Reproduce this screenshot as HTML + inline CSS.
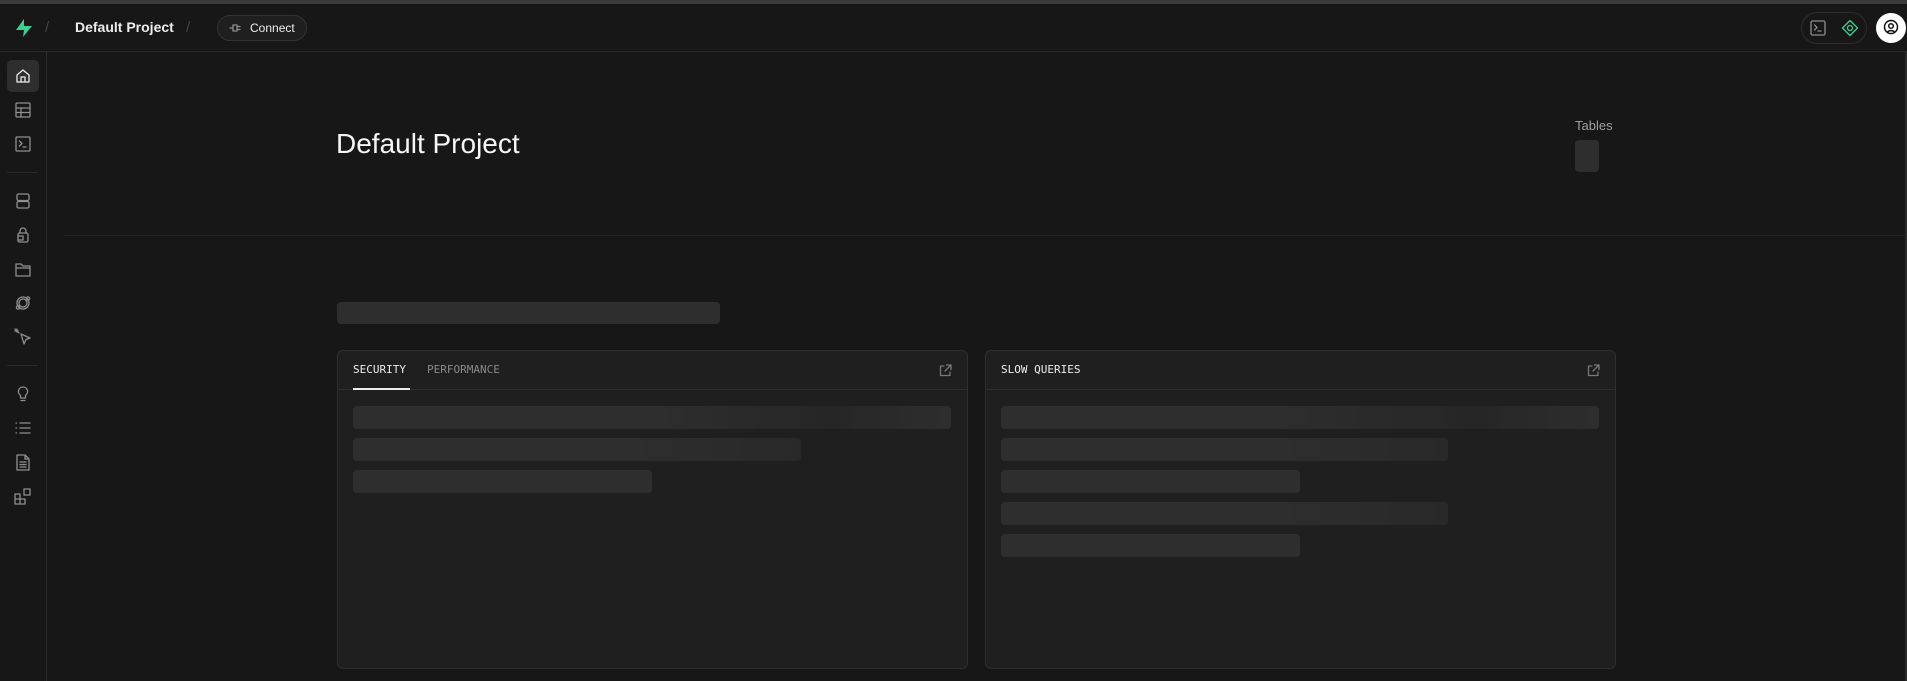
<!DOCTYPE html>
<html><head><meta charset="utf-8"><style>
*{box-sizing:border-box;margin:0;padding:0}
body{width:1907px;height:681px;background:#171717;overflow:hidden;position:relative;font-family:"Liberation Sans",sans-serif;color:#ededed}
.abs{position:absolute}
.sk{position:absolute;background:#2e2e2e;border-radius:4px;height:23px}
.mono{font-family:"DejaVu Sans Mono","Liberation Mono",monospace;font-size:11px}
svg{position:absolute;fill:none;stroke:#8f8f8f;stroke-width:1.3;stroke-linecap:round;stroke-linejoin:round}
</style></head><body>
<div class="abs" style="left:0;top:0;width:1907px;height:4px;background:#3b3b3b"></div>
<div class="abs" style="left:0;top:51px;width:1907px;height:1px;background:#2a2a2a"></div>
<div class="abs" style="left:46px;top:52px;width:1px;height:629px;background:#2a2a2a"></div>
<div class="abs" style="left:1905px;top:52px;width:2px;height:629px;background:#2a2a2a"></div>
<svg style="left:14px;top:18px;stroke:none" width="20" height="20" viewBox="0 0 20 20"><path d="M10 1 L2 12 H10 L9 19 L18 8 H10 Z" fill="#3ecf8e"/></svg>
<div class="abs" style="left:45px;top:19px;color:#444;font-size:15px">/</div>
<div class="abs" style="left:75px;top:19px;font-size:14px;font-weight:bold;color:#ededed">Default Project</div>
<div class="abs" style="left:186px;top:19px;color:#444;font-size:15px">/</div>
<div class="abs" style="left:217px;top:15px;width:90px;height:26px;border:1px solid #333;border-radius:13px;background:#1f1f1f"></div>
<svg style="left:229px;top:22px" width="13" height="12" viewBox="0 0 13 12"><path d="M1 6H4M4 3H8V9H4ZM8 4.5H11M8 7.5H11"/></svg>
<div class="abs" style="left:250px;top:21px;font-size:12px;color:#ededed">Connect</div>
<div class="abs" style="left:1801px;top:12px;width:66px;height:32px;border:1px solid #2e2e2e;border-radius:16px"></div>
<svg style="left:1810px;top:20px" width="16" height="16" viewBox="0 0 16 16"><rect x="1" y="1" width="14" height="14" rx="1.5"/><path d="M4.5 5L7 7.5L4.5 10M8 11H11"/></svg>
<svg style="left:1841px;top:19px;stroke:#3ecf8e" width="18" height="18" viewBox="0 0 18 18"><path d="M9 1.5L16.5 9L9 16.5L1.5 9Z"/><circle cx="9" cy="9" r="2.5"/></svg>
<div class="abs" style="left:1876px;top:13px;width:30px;height:30px;border-radius:50%;background:#fff"></div>
<svg style="left:1883px;top:19px;stroke:#111;stroke-width:1.5" width="16" height="18" viewBox="0 0 16 18"><circle cx="8" cy="8" r="6.5"/><circle cx="8" cy="7" r="2.3"/><path d="M4.5 13.5C5 11 11 11 11.5 13.5"/></svg>
<div class="abs" style="left:7px;top:60px;width:32px;height:32px;border-radius:5px;background:#2e2e2e"></div>
<svg style="left:15px;top:68px;stroke:#ededed" width="16" height="16" viewBox="0 0 16 16"><path d="M2 7L8 2L14 7V14H2ZM6 14V9H10V14"/></svg>
<svg style="left:15px;top:102px" width="16" height="16" viewBox="0 0 16 16"><rect x="1" y="1" width="14" height="14" rx="1"/><path d="M1 6H15M1 10.5H15M6 6V15"/></svg>
<svg style="left:15px;top:136px" width="16" height="16" viewBox="0 0 16 16"><rect x="1" y="1" width="14" height="14" rx="1"/><path d="M4.5 5L7 7.5L4.5 10M8 11H11"/></svg>
<div class="abs" style="left:7px;top:172px;width:31px;height:1px;background:#2a2a2a"></div>
<svg style="left:15px;top:193px" width="16" height="16" viewBox="0 0 16 16"><rect x="2" y="1" width="12" height="6.5" rx="1.5"/><rect x="2" y="8.5" width="12" height="6.5" rx="1.5"/></svg>
<svg style="left:15px;top:227px" width="16" height="16" viewBox="0 0 16 16"><path d="M5 6V4A3 3 0 0 1 11 4V6"/><rect x="3" y="6" width="10" height="9" rx="1.5"/><path d="M3 9H8V13H3"/></svg>
<svg style="left:15px;top:261px" width="16" height="16" viewBox="0 0 16 16"><path d="M1 3H6L8 5H15V15H1ZM1 7H15"/></svg>
<svg style="left:15px;top:295px" width="16" height="16" viewBox="0 0 16 16"><circle cx="8" cy="8" r="6"/><circle cx="13" cy="3.5" r="1.6"/><circle cx="3" cy="12.5" r="1.6"/><circle cx="8" cy="8" r="4"/></svg>
<svg style="left:14px;top:328px" width="18" height="18" viewBox="0 0 18 18"><path d="M1 1L5 5M3 1V4M1 3H4M7 6L16 10L12 11.5L10 16Z"/></svg>
<div class="abs" style="left:7px;top:365px;width:31px;height:1px;background:#2a2a2a"></div>
<svg style="left:15px;top:386px" width="16" height="17" viewBox="0 0 16 17"><path d="M8 1A4.5 4.5 0 0 0 5.5 9.3V12H10.5V9.3A4.5 4.5 0 0 0 8 1ZM6 14.5H10"/></svg>
<svg style="left:15px;top:420px" width="16" height="16" viewBox="0 0 16 16"><path d="M5 3H15M5 8H15M5 13H15M1 3H1.5M1 8H1.5M1 13H1.5"/></svg>
<svg style="left:15px;top:454px" width="16" height="17" viewBox="0 0 16 17"><path d="M2 1H10L14 5V16H2ZM5 8H11M5 10.5H11M5 13H11M10 1V5H14"/></svg>
<svg style="left:14px;top:488px" width="17" height="17" viewBox="0 0 17 17"><path d="M1 6H6V11H1ZM6 11H11V16H6ZM1 11H6V16H1ZM10 1H16V7H10Z"/></svg>
<div class="abs" style="left:336px;top:128px;font-size:28px;color:#f5f5f5">Default Project</div>
<div class="abs" style="left:1575px;top:118px;font-size:13px;color:#a0a0a0">Tables</div>
<div class="sk" style="left:1575px;top:140px;width:24px;height:32px;border-radius:4px"></div>
<div class="abs" style="left:64px;top:235px;width:1843px;height:1px;background:#242424"></div>
<div class="sk" style="left:337px;top:302px;width:383px;height:22px"></div>
<div class="abs" style="left:337px;top:350px;width:631px;height:319px;background:#1f1f1f;border:1px solid #2e2e2e;border-radius:6px"></div>
<div class="abs" style="left:338px;top:389px;width:629px;height:1px;background:#2e2e2e"></div>
<div class="abs mono" style="left:353px;top:363px;color:#ededed">SECURITY</div>
<div class="abs mono" style="left:427px;top:363px;color:#8a8a8a">PERFORMANCE</div>
<div class="abs" style="left:353px;top:388px;width:57px;height:2px;background:#ededed"></div>
<svg style="left:939px;top:364px;stroke:#777" width="13" height="13" viewBox="0 0 13 13"><path d="M5 2H1.5V11.5H11V8M7.5 1H12V5.5M12 1L6 7"/></svg>
<div class="sk" style="left:353px;top:406px;width:598px;background:linear-gradient(90deg,#2e2e2e 50%,#262626 80%,#2e2e2e)"></div>
<div class="sk" style="left:353px;top:438px;width:448px;background:linear-gradient(90deg,#2e2e2e 60%,#292929)"></div>
<div class="sk" style="left:353px;top:470px;width:299px"></div>
<div class="abs" style="left:985px;top:350px;width:631px;height:319px;background:#1f1f1f;border:1px solid #2e2e2e;border-radius:6px"></div>
<div class="abs" style="left:986px;top:389px;width:629px;height:1px;background:#2e2e2e"></div>
<div class="abs mono" style="left:1001px;top:363px;color:#ededed">SLOW QUERIES</div>
<svg style="left:1587px;top:364px;stroke:#777" width="13" height="13" viewBox="0 0 13 13"><path d="M5 2H1.5V11.5H11V8M7.5 1H12V5.5M12 1L6 7"/></svg>
<div class="sk" style="left:1001px;top:406px;width:598px;background:linear-gradient(90deg,#2e2e2e 45%,#262626 80%,#2e2e2e)"></div>
<div class="sk" style="left:1001px;top:438px;width:447px;background:linear-gradient(90deg,#2e2e2e 60%,#292929)"></div>
<div class="sk" style="left:1001px;top:470px;width:299px"></div>
<div class="sk" style="left:1001px;top:502px;width:447px;background:linear-gradient(90deg,#2e2e2e 60%,#292929)"></div>
<div class="sk" style="left:1001px;top:534px;width:299px"></div>
</body></html>
